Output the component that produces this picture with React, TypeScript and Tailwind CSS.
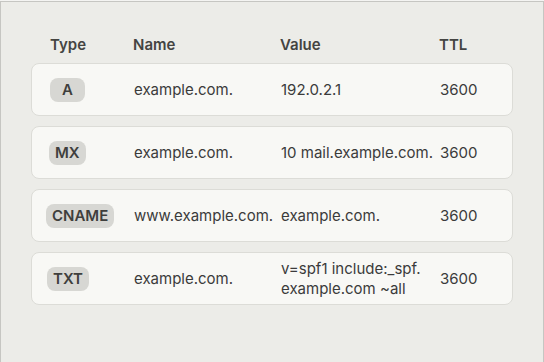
import React from 'react';

type DnsRecord = { type: string; name: string; value: string[]; ttl: number };

// value split into pieces where the line may break
const records: DnsRecord[] = [
  { type: 'A', name: 'example.com.', value: ['192.0.2.1'], ttl: 3600 },
  { type: 'MX', name: 'example.com.', value: ['10 mail.example.com.'], ttl: 3600 },
  { type: 'CNAME', name: 'www.example.com.', value: ['example.com.'], ttl: 3600 },
  { type: 'TXT', name: 'example.com.', value: ['v=spf1 include:_spf.', 'example.com ~all'], ttl: 3600 },
];

// badge offsets differ a little per type in the shot
const badgeShift: Record<string, string> = {
  A: 'ml-[2px]',
  MX: 'ml-[1px]',
  CNAME: '-ml-[2px]',
  TXT: '-ml-[1px]',
};

const cols = 'grid grid-cols-[86px_147px_159px_1fr] items-center';

export default function App() {
  return (
    <div className="h-[362px] w-[544px] overflow-hidden bg-[#f4f4f2] pt-[1px]" style={{ fontFamily: 'Inter, "Noto Sans", sans-serif' }}>
      <div className="h-[361px] w-[544px] border border-b-0 border-[#c6c6c2] bg-[#ecece8] px-[30px] pt-[33px] text-[#3b3b3b]">
        {/* header */}
        <div className={`${cols} px-[19px] text-[15px] font-semibold leading-5 text-[#444442]`}>
          <span>Type</span>
          <span className="-ml-[3px]">Name</span>
          <span className="-ml-[3px]">Value</span>
          <span className="-ml-[3px]">TTL</span>
        </div>

        {/* rows */}
        <div className="mt-[8px] flex flex-col gap-[10px]">
          {records.map(r => (
            <div
              key={r.type}
              className={`${cols} min-h-[53px] rounded-lg border border-[#dcdcd7] bg-[#f8f8f5] px-4 py-[5px] text-[15px] leading-5`}
            >
              <div>
                <span className={`inline-flex h-6 min-w-[35px] items-center justify-center rounded-lg bg-[#d7d7d3] px-[6px] text-[15px] font-semibold text-[#3f3f3d] ${badgeShift[r.type]}`}>
                  {r.type}
                </span>
              </div>
              <span>{r.name}</span>
              <span className="pr-[6px]">
                {r.value.map((part, i) => (
                  <React.Fragment key={i}>
                    {i > 0 && <wbr />}
                    {part}
                  </React.Fragment>
                ))}
              </span>
              <span>{r.ttl}</span>
            </div>
          ))}
        </div>
      </div>
    </div>
  );
}
